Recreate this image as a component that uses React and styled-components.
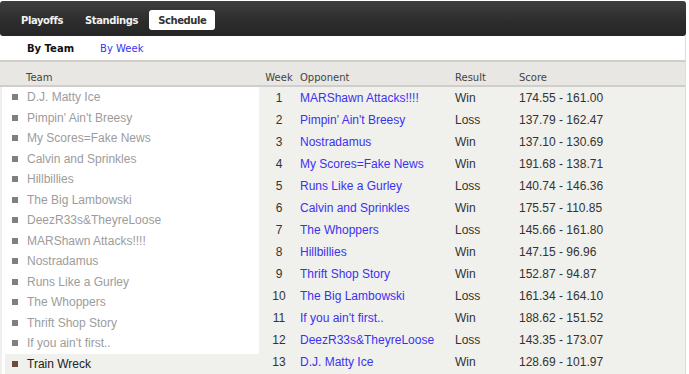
import React from "react";
import styled, { createGlobalStyle } from "styled-components";

const GlobalStyle = createGlobalStyle`
  body {
    margin: 0;
    background: #fff;
    font-family: "Liberation Sans", Arial, sans-serif;
  }
`;

const teams = [
  "D.J. Matty Ice",
  "Pimpin' Ain't Breesy",
  "My Scores=Fake News",
  "Calvin and Sprinkles",
  "Hillbillies",
  "The Big Lambowski",
  "DeezR33s&TheyreLoose",
  "MARShawn Attacks!!!!",
  "Nostradamus",
  "Runs Like a Gurley",
  "The Whoppers",
  "Thrift Shop Story",
  "If you ain't first..",
  "Train Wreck",
];

const games = [
  ["MARShawn Attacks!!!!", "Win", "174.55 - 161.00"],
  ["Pimpin' Ain't Breesy", "Loss", "137.79 - 162.47"],
  ["Nostradamus", "Win", "137.10 - 130.69"],
  ["My Scores=Fake News", "Win", "191.68 - 138.71"],
  ["Runs Like a Gurley", "Loss", "140.74 - 146.36"],
  ["Calvin and Sprinkles", "Win", "175.57 - 110.85"],
  ["The Whoppers", "Loss", "145.66 - 161.80"],
  ["Hillbillies", "Win", "147.15 - 96.96"],
  ["Thrift Shop Story", "Win", "152.87 - 94.87"],
  ["The Big Lambowski", "Loss", "161.34 - 164.10"],
  ["If you ain't first..", "Win", "188.62 - 151.52"],
  ["DeezR33s&TheyreLoose", "Loss", "143.35 - 173.07"],
  ["D.J. Matty Ice", "Win", "128.69 - 101.97"],
];

const COLS = "259px 40px 155px 64px 1fr";

const Wrapper = styled.div`
  width: 686px;
  padding-top: 1px;
`;

const NavBar = styled.nav`
  height: 35px;
  box-sizing: border-box;
  padding: 9px 0 0 10px;
  display: flex;
  align-items: flex-start;
  background: linear-gradient(#3e3e3e, #2c2c2c 60%, #262626);
  border-radius: 3px;
`;

const Tab = styled.a`
  height: 20px;
  line-height: 21px;
  padding: ${(p) => (p.$active ? "0 9px" : "0 11px")};
  border-radius: 3px;
  font-family: "DejaVu Sans", Verdana, sans-serif;
  font-size: 10px;
  font-weight: bold;
  letter-spacing: -0.4px;
  color: ${(p) => (p.$active ? "#333" : "#f2f2f2")};
  background: ${(p) => (p.$active ? "#fff" : "transparent")};
`;

const Panel = styled.div`
  border-right: 1px solid #dcdcd8;
`;

const SubNav = styled.div`
  height: 24px;
  display: flex;
  align-items: center;
  padding-left: 27px;
  gap: 26px;
  font-family: "DejaVu Sans", Verdana, sans-serif;
  font-size: 10px;
  background: #fff;
`;

const SubLink = styled.a`
  font-weight: ${(p) => (p.$active ? "bold" : "normal")};
  color: ${(p) => (p.$active ? "#111" : "#3b32f2")};
`;

const HeadRow = styled.div`
  display: grid;
  grid-template-columns: ${COLS};
  height: 23px;
  align-items: center;
  background: #e8e7e3;
  border-top: 2px solid #cfcecb;
  border-bottom: 2px solid #cfcecb;
  font-family: "DejaVu Sans", Verdana, sans-serif;
  font-size: 10px;
  color: #444;
`;

const HeadCell = styled.div`
  padding-top: 7px;
  padding-left: ${(p) => p.$pad || "1px"};
  text-align: ${(p) => (p.$center ? "center" : "left")};
`;

const Body = styled.div`
  display: grid;
  grid-template-columns: 259px 1fr;
  background: #f0f0ec;
`;

const TeamList = styled.ul`
  list-style: none;
  margin: 0 0 0 1px;
  padding: 0 0 0 3px;
  background: #fff;
  border-left: 1px solid #eeeeee;
`;

const TeamItem = styled.li`
  height: 20.5px;
  display: flex;
  align-items: center;
  gap: 9px;
  padding-left: 7px;
  font-size: 12px;
  color: ${(p) => (p.$selected ? "#222" : "#9c9c9c")};
  background: ${(p) => (p.$selected ? "#f0f0ec" : "#fff")};
`;

const Marker = styled.span`
  width: 6px;
  height: 6px;
  background: ${(p) => (p.$selected ? "#6a4b3c" : "#808080")};
`;

const GameRow = styled.div`
  display: grid;
  grid-template-columns: 40px 155px 64px 1fr;
  height: 22px;
  align-items: center;
  font-size: 12px;
  color: #333;
`;

const Cell = styled.div`
  padding-left: ${(p) => (p.$center ? "0" : "1px")};
  text-align: ${(p) => (p.$center ? "center" : "left")};
  white-space: nowrap;
`;

const Opponent = styled.a`
  color: #3b32f2;
`;

export default function App() {
  return (
    <>
      <GlobalStyle />
      <Wrapper>
        <NavBar>
          <Tab>Playoffs</Tab>
          <Tab>Standings</Tab>
          <Tab $active>Schedule</Tab>
        </NavBar>
        <Panel>
          <SubNav>
            <SubLink $active>By Team</SubLink>
            <SubLink>By Week</SubLink>
          </SubNav>
          <HeadRow>
            <HeadCell $pad="26px">Team</HeadCell>
            <HeadCell $center $pad="0">Week</HeadCell>
            <HeadCell>Opponent</HeadCell>
            <HeadCell>Result</HeadCell>
            <HeadCell>Score</HeadCell>
          </HeadRow>
          <Body>
            <TeamList>
              {teams.map((t, i) => {
                const sel = i === teams.length - 1;
                return (
                  <TeamItem key={t} $selected={sel}>
                    <Marker $selected={sel} />
                    {t}
                  </TeamItem>
                );
              })}
            </TeamList>
            <div>
              {games.map(([opp, res, score], i) => (
                <GameRow key={i}>
                  <Cell $center>{i + 1}</Cell>
                  <Cell>
                    <Opponent>{opp}</Opponent>
                  </Cell>
                  <Cell>{res}</Cell>
                  <Cell>{score}</Cell>
                </GameRow>
              ))}
            </div>
          </Body>
        </Panel>
      </Wrapper>
    </>
  );
}
